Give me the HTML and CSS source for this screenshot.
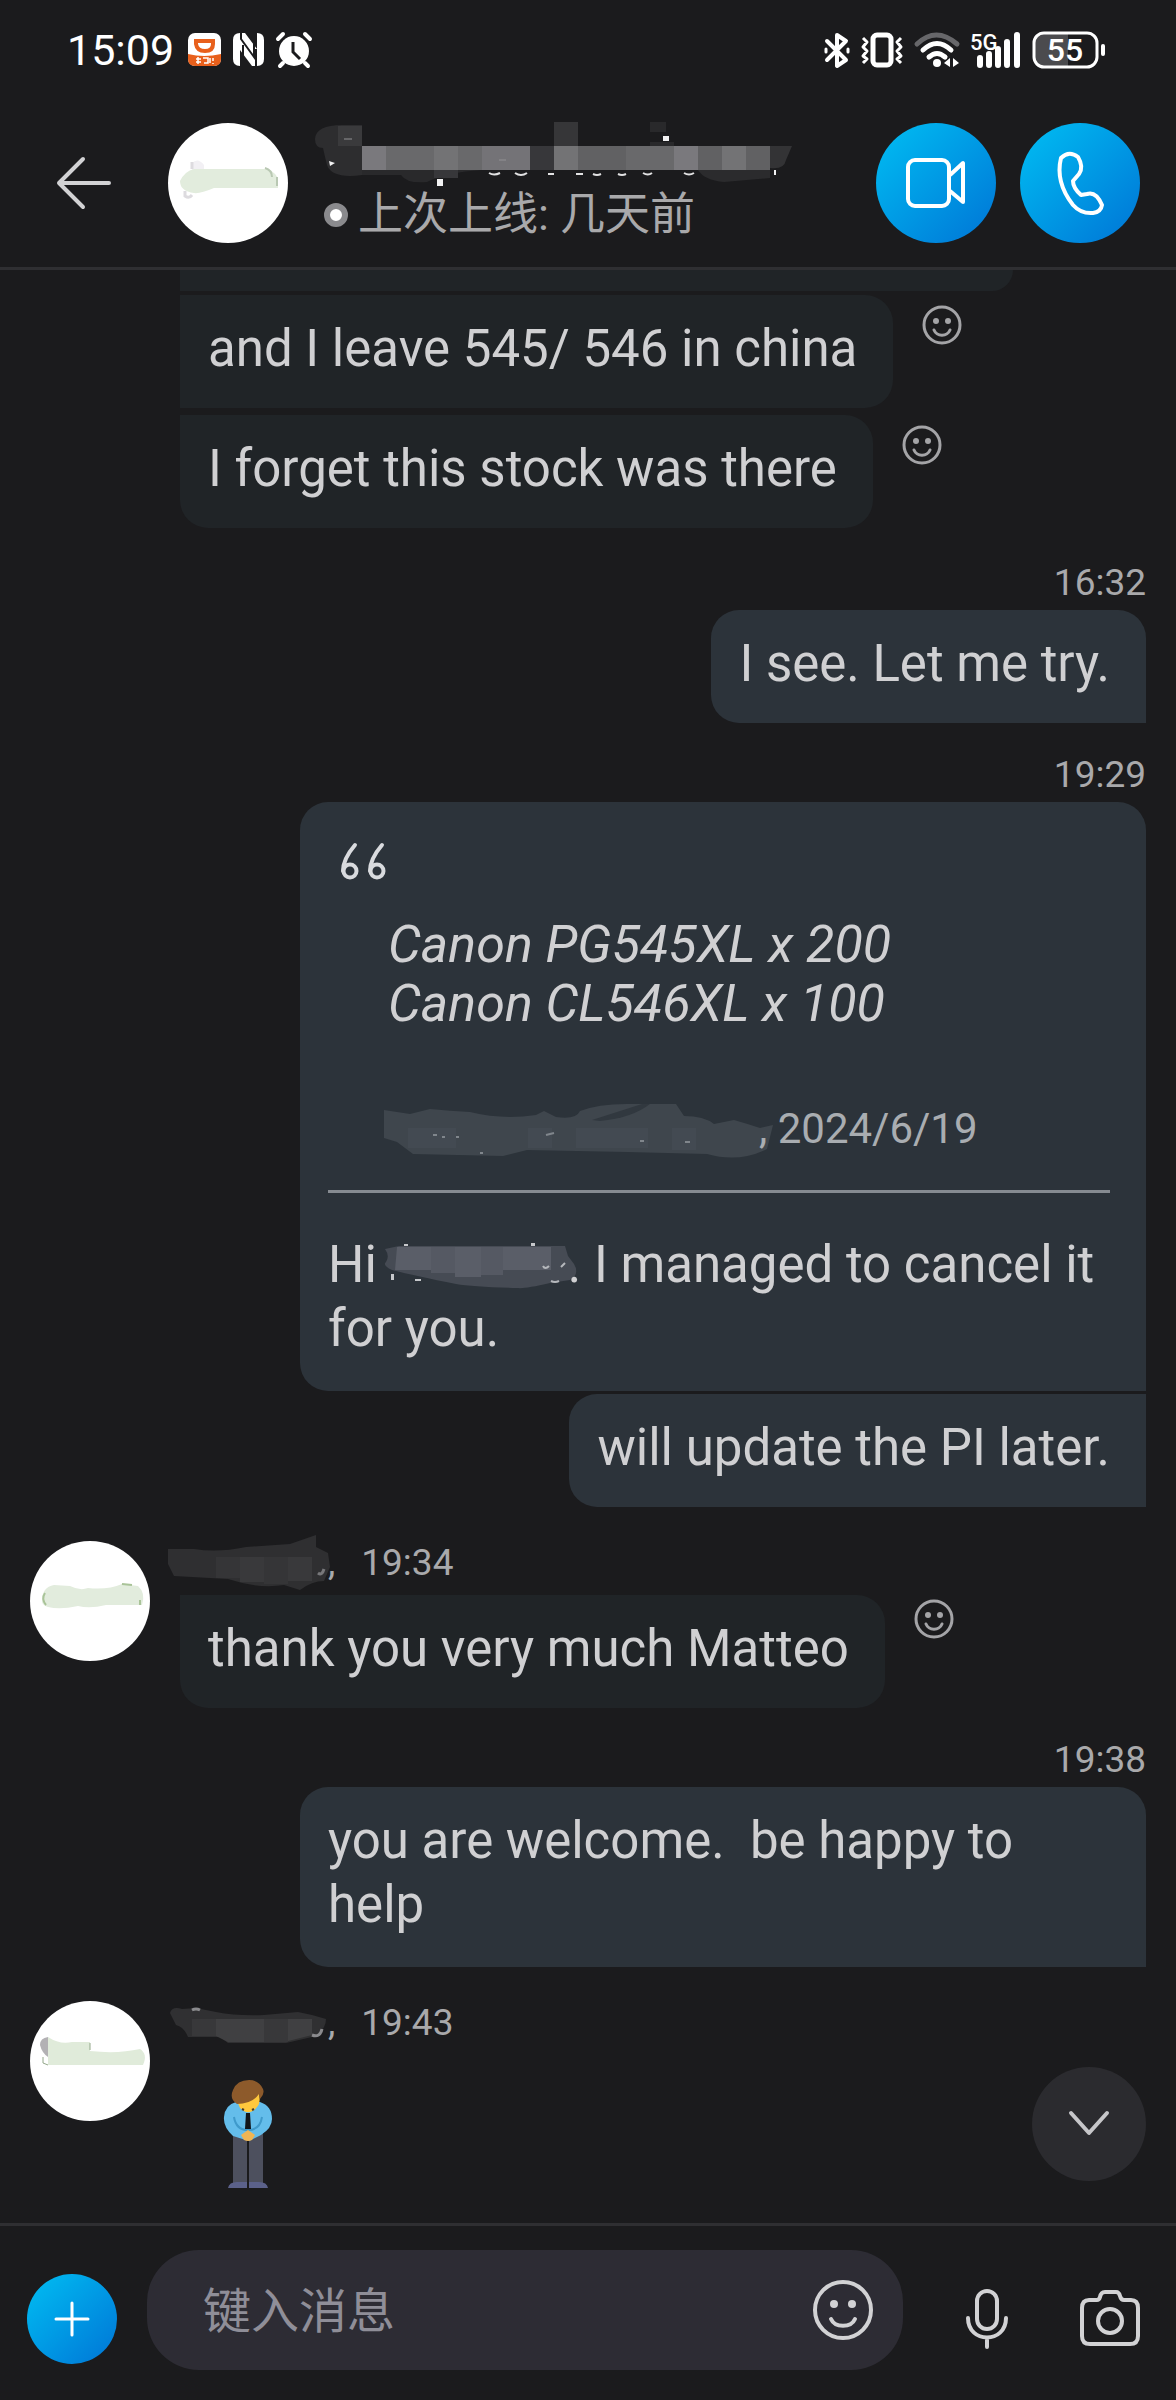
FILE: index.html
```html
<!DOCTYPE html>
<html lang="zh-CN">
<head>
<meta charset="utf-8">
<meta name="viewport" content="width=device-width, initial-scale=1">
<title>Chat</title>
<link rel="stylesheet" href="styles.css">
</head>
<body>
<svg class="defs" width="0" height="0" aria-hidden="true">
  <symbol id="smile" viewBox="0 0 40 40">
    <circle cx="20" cy="20" r="18" fill="none" stroke="currentColor" stroke-width="3"/>
    <circle cx="14" cy="16" r="3" fill="currentColor"/>
    <circle cx="26" cy="16" r="3" fill="currentColor"/>
    <path d="M12 25c3 7 13 7 16 0" fill="none" stroke="currentColor" stroke-width="3" stroke-linecap="round"/>
  </symbol>
</svg>

<div class="status-bar">
  <span class="clock">15:09</span>
  <div class="status-left">
    <svg width="33" height="34" viewBox="0 0 33 34" aria-hidden="true">
      <rect width="33" height="33" rx="7" fill="#fff"/>
      <path d="M0 21q16 4 33 0v5q0 7-7 7H7q-7 0-7-7z" fill="#e8601c"/>
      <path d="M8 8h17v3q0 7-8 7t-9-7z" fill="none" stroke="#e8601c" stroke-width="4"/>
      <path d="M8 26h5M10 24v7M8 29h5M15 25h5v5h-4M22 25v5M25 25v3M25 30v1" stroke="#fff" stroke-width="1.5" fill="none"/>
    </svg>
    <svg width="31" height="34" viewBox="0 0 31 34" aria-hidden="true">
      <path d="M7 0h5l12 16V0q7 0 7 7v19q0 7-7 7h-5L7 17v16q-7 0-7-7V7q0-7 7-7z" fill="#fff"/>
      <path d="M8 0v6l13 18V4M10 33V12M23 33V16" stroke="#1b1b1d" stroke-width="2" fill="none"/>
    </svg>
    <svg width="36" height="36" viewBox="0 0 36 36" aria-hidden="true">
      <circle cx="18" cy="19" r="15" fill="#fff"/>
      <path d="M2 7l5-5M34 7l-5-5M7 31l-3 3M29 31l3 3" stroke="#fff" stroke-width="4" stroke-linecap="round"/>
      <path d="M17 10v10l7 7" stroke="#1b1b1d" stroke-width="3" fill="none"/>
    </svg>
  </div>
  <div class="status-right">
    <svg width="26" height="38" viewBox="0 0 26 38" aria-hidden="true" fill="none" stroke="#fff" stroke-width="4" stroke-linejoin="round" stroke-linecap="round">
      <path d="M3 10l19 19-9 6V4l9 6L3 29"/>
      <path d="M2 18v3M24 18v3" stroke-width="3"/>
    </svg>
    <svg width="44" height="38" viewBox="0 0 44 38" aria-hidden="true" fill="none" stroke="#fff" stroke-linejoin="round">
      <rect x="13" y="4" width="18" height="30" rx="4" stroke-width="5"/>
      <path d="M3 7l4 4-4 5 4 4-4 5 4 3-4 4M41 7l-4 4 4 5-4 4 4 5-4 3 4 4" stroke-width="3"/>
    </svg>
    <svg width="46" height="38" viewBox="0 0 46 38" aria-hidden="true" fill="none" stroke-linecap="round" stroke-width="5">
      <path d="M3 13q19-18 40 0" stroke="#67676a"/>
      <path d="M9 19q14-13 28 0M15 26q8-7 16 0" stroke="#fff"/>
      <circle cx="23" cy="32" r="4" fill="#fff"/>
      <path d="M36 27v9l-6-4zM39 27v9l6-4z" fill="#fff"/>
    </svg>
    <svg width="52" height="38" viewBox="0 0 52 38" aria-label="5G">
      <text x="0" y="19" class="net">5G</text>
      <path d="M10 27v7M19 23v11M28 18v16M37 11v23M47 4v30" stroke="#fff" stroke-width="6" stroke-linecap="round"/>
    </svg>
    <svg width="74" height="38" viewBox="0 0 74 38" aria-label="55%">
      <path d="M12 3h24v32H12q-9 0-9-9V12q0-9 9-9z" fill="#4b4b4e"/>
      <rect x="2" y="2" width="63" height="34" rx="10" fill="none" stroke="#fff" stroke-width="3"/>
      <text x="33" y="30" text-anchor="middle" class="battery">55</text>
      <path d="M71 15v8" stroke="#fff" stroke-width="4" stroke-linecap="round"/>
    </svg>
  </div>
</div>

<header class="header">
  <button class="icon-button back" aria-label="返回">
    <svg width="54" height="54" viewBox="0 0 54 54" fill="none" stroke="#d2d2d4" stroke-width="4" stroke-linecap="round" stroke-linejoin="round"><path d="M26 3L2 27l24 24M2 27h50"/></svg>
  </button>
  <svg class="avatar" viewBox="0 0 120 120" role="img" aria-label="头像">
    <circle cx="60" cy="60" r="60" fill="#fff"/>
    <path d="M24 40q6-6 12 2v8H24z" fill="#f2f0f4"/>
    <path d="M12 58q5-10 14-12h74q8 4 10 10v9H46q-14 6-20 5-14-2-14-12z" fill="#e2ecdd"/>
    <path d="M24 46v-7M17 68v5q4 3 7-1" stroke="#dddbdf" stroke-width="3" fill="none"/>
    <path d="M97 45q7 2 7 9M109 54v9" stroke="#b9c8b3" stroke-width="2" fill="none"/>
  </svg>
  <div class="who">
    <svg width="480" height="75" viewBox="0 0 480 75" role="img" aria-label="联系人">
      <path d="M3 22Q4 8 30 8h20v50q-30 4-35-10-2-8-4-17-8 0-8-9z" fill="#2d2d2f"/>
      <path d="M50 53h120q-35 2-55 12-20 2-26-7H50z" fill="#29292b"/>
      <path d="M386 53h72v8l-46 4q-20-2-26-12z" fill="#2b2b2d"/>
      <path d="M26 9h24v20H26z" fill="#3a3a3c"/>
      <path d="M242 5h24v24h-24z" fill="#363638"/>
      <path d="M338 5h16v10h-16zM338 25h24v4h-24z" fill="#29292b"/>
      <path d="M50 29h24v24H50zM362 29h24v24h-24z" fill="#7a797d"/>
      <path d="M74 29h48v24H74zM146 29h24v24h-24zM314 29h48v24h-48z" fill="#69696b"/>
      <path d="M122 29h24v24h-24zM242 29h24v24h-24zM410 29h24v24h-24z" fill="#737375"/>
      <path d="M170 29h48v24h-48z" fill="#747377"/>
      <path d="M122 53h24v8h-24zM218 29h24v24h-24z" fill="#37373a"/>
      <path d="M266 29h48v24h-48zM386 29h24v24h-24zM434 29h24v24h-24z" fill="#616163"/>
      <path d="M458 29h22l-6 14q-2 10-16 8z" fill="#333335"/>
      <path d="M125 62h6v7h-6zM351 19h6v5h-6zM462 53h2v5h-2zM17 44l6 2-5 3z" fill="#f1f1f2"/>
      <path d="M177 56q5 3 11 0M203 56q6 4 12 0M236 57h6M264 57h7M281 57q4 2 8 0M306 57q4 2 8 0M331 56q5 3 9 0M372 56q5 3 10 0" stroke="#e2e2e3" stroke-width="2" fill="none"/>
      <path d="M32 22h8M187 43h7" stroke="#929295" stroke-width="1"/>
    </svg>
    <p class="presence"><span class="dot"></span>上次上线: 几天前</p>
  </div>
  <div class="calls">
    <button class="round call" aria-label="视频通话">
      <svg width="62" height="54" viewBox="0 0 62 54" fill="none" stroke="#fff" stroke-width="4" stroke-linejoin="round"><rect x="3" y="4" width="41" height="46" rx="7"/><path d="M45 19L58 7v39L45 35"/></svg>
    </button>
    <button class="round call" aria-label="语音通话">
      <svg width="50" height="64" viewBox="0 0 50 64" fill="none" stroke="#fff" stroke-width="4" stroke-linejoin="round"><path d="M6 7Q14-1 23 6q6 10 1 17l-6 7q0 7 8 14l6-1q9-3 15 11-1 7-9 8-12 1-20-8Q0 31 6 7z"/></svg>
    </button>
  </div>
</header>

<main class="chat">
  <section class="received tail">
    <div class="bubble clipped"></div>
    <div class="row spaced"><p class="bubble">and I leave 545/ 546 in china</p>
      <button class="icon-button react" aria-label="添加表情"><svg width="40" height="40"><use href="#smile"/></svg></button></div>
    <div class="row"><p class="bubble last">I forget this stock was there</p>
      <button class="icon-button react" aria-label="添加表情"><svg width="40" height="40"><use href="#smile"/></svg></button></div>
  </section>

  <section class="sent">
    <time class="stamp">16:32</time>
    <p class="bubble">I see. Let me try.</p>
  </section>

  <section class="sent">
    <time class="stamp">19:29</time>
    <div class="bubble multiline">
      <blockquote class="quote">
        <svg class="quote-mark" width="44" height="38" viewBox="0 0 44 38" fill="none" stroke="#d9dbde" stroke-width="4" stroke-linecap="round"><path d="M14 2Q2 16 2 28"/><circle cx="9" cy="28" r="6.500"/><path d="M41 2Q29 16 29 28"/><circle cx="36" cy="28" r="6.500"/></svg>
        <p class="quote-text">Canon PG545XL x 200<br>Canon CL546XL x 100</p>
        <footer class="quote-meta">
          <svg width="371" height="50" viewBox="0 0 371 50" role="img" aria-label="姓名">
            <path d="M-4 6l26 4 20-5q20 2 40 3 32 8 66 3l8-4 12 6q20 3 24-6 20-8 54-7h42l8 12q20 0 30 8l20-4q14 4 26 8l13-3-6 24q-28 14-60 5l-80-2-100-2-24 6-90-2-16-12-13-4z" fill="#3f464d"/>
            <path d="M20 24h48v20H20zM140 24h24v20h-24zM188 24h72v20h-72zM284 24h24v22h-24z" fill="#434a52"/>
            <path d="M204 16l50-16h8q-18 14-50 17z" fill="#31383f"/>
            <path d="M45 31h4M54 33h3M68 33h3M158 31l8-2M252 37h4M297 38h5M92 49h3" stroke="#80868c" stroke-width="2"/>
          </svg><span>, 2024/6/19</span>
        </footer>
      </blockquote>
      <p class="reply">Hi<svg class="name-mask" width="183" height="44" viewBox="0 0 183 44" role="img" aria-label="姓名">
        <path d="M0 3l14-3h166l3 10 6 8q6 10-4 16l-20 3q-26 6-32 5-44-1-62-4-40-8-64-14-10-5-6-8 4-6-1-13z" fill="#464b54"/>
        <path d="M12 1h34v23H10zM70 1h26v30H70zM118 1h48v23h-48z" fill="#5a5e68"/>
        <path d="M46 1h24v26H46zM96 1h22v28H96z" fill="#555963"/>
        <path d="M6 28h3v6H6zM19-2h4v2h-4zM146-3h4v3h-4zM30 33h6v2h-6z" fill="#c6c8cb"/>
        <path d="M158 20q2 4 6 0M166 35q4 2 8 0M176 21l4-4" stroke="#b5b8bc" stroke-width="2" fill="none"/>
      </svg>. I managed to cancel it for you.</p>
    </div>
    <p class="bubble joined">will update the PI later.</p>
  </section>

  <section class="received">
    <svg class="avatar" viewBox="0 0 120 120" role="img" aria-label="头像">
      <circle cx="60" cy="60" r="60" fill="#fff"/>
      <path d="M12 60q0-14 12-16l16 1q10 5 18 2 20 2 34-4l16 2q8 7 4 19H76q-16 4-28 1-18 4-30 1-6-2-6-6z" fill="#e2ecdd"/>
      <path d="M15 52q-4 6 1 12M110 59v5M92 43l10 1" stroke="#a9c398" stroke-width="2" fill="none"/>
    </svg>
    <div class="messages">
      <p class="sender">
        <svg width="148" height="44" viewBox="0 0 148 44" role="img" aria-label="姓名">
          <path d="M-12 8h26q24 4 52-2l44-3 26-9v12l12 6 2 14-6 14q-12 0-24 9l-16-5q-26 4-56-6l-54-3-6-12z" fill="#2f2f31"/>
          <path d="M60 16h24v25H60zM108 16h24v24h-24z" fill="#39393b"/>
          <path d="M36 16h24v21H36zM84 16h24v27H84z" fill="#353537"/>
          <path d="M138 32q4 3 6-4" stroke="#77777a" stroke-width="3" fill="none"/>
        </svg><span>,</span><time>19:34</time>
      </p>
      <div class="row"><p class="bubble last">thank you very much Matteo</p>
        <button class="icon-button react high" aria-label="添加表情"><svg width="40" height="40"><use href="#smile"/></svg></button></div>
    </div>
  </section>

  <section class="sent">
    <time class="stamp">19:38</time>
    <p class="bubble multiline">you are welcome.&nbsp; be happy to help</p>
  </section>

  <section class="received">
    <svg class="avatar" viewBox="0 0 120 120" role="img" aria-label="头像">
      <circle cx="60" cy="60" r="60" fill="#fff"/>
      <path d="M10 44q0-7 8-8v20q-6-4-8-12z" fill="#b3b1b4"/>
      <path d="M18 36q12 8 24 5h18v9q28 3 50-2 8 5 3 16H18z" fill="#e0ebda"/>
      <path d="M60 42v7M13 56v6l5 2" stroke="#93a78a" stroke-width="1" fill="none"/>
    </svg>
    <div class="messages">
      <p class="sender">
        <svg width="148" height="44" viewBox="0 0 148 44" role="img" aria-label="姓名">
          <path d="M-10 12q2-7 12-4l14-1 20 4q20 4 48 3l34-3 14 3 14 4q0 12-14 18l-26 6H48l-8-6H8q-4-10-12-12z" fill="#303032"/>
          <path d="M36 18h48v23H48l-12-6zM108 18h24v16l-24 6z" fill="#404042"/>
          <path d="M12 18h24v17H12zM84 18h24v23H84z" fill="#38383a"/>
          <path d="M132 34q8 3 10-6M12 9q4-2 8 0" stroke="#8a8a8d" stroke-width="3" fill="none"/>
        </svg><span>,</span><time>19:43</time>
      </p>
      <svg class="emoji" width="50" height="110" viewBox="0 0 50 110" role="img" aria-label="鞠躬">
        <path d="M10 54h14v50H10zM26 54h14v50H26z" fill="#4d505e"/>
        <path d="M5 109q1-6 9-6h10v6zM26 109v-6h10q8 0 9 6z" fill="#5b618a"/>
        <path d="M13 23h24q12 4 12 17 0 9-11 16l-12 6-16-5Q0 48 1 38q1-12 12-15z" fill="#64bdeb"/>
        <path d="M11 38q2 13 14 13t14-13" fill="none" stroke="#3f9acb" stroke-width="2"/>
        <path d="M14 22l22-8q2 10-2 14-8 10-17 1z" fill="#ffc83d"/>
        <path d="M19 30l2 1M29 31l2-1" stroke="#493b28" stroke-width="2"/>
        <path d="M23 34h4l1 16h-6z" fill="#12151a"/>
        <path d="M18 56l7-5 7 5-3 5q-4 2-8 0z" fill="#f0b554"/>
        <path d="M14 25Q6 20 10 11q4-10 16-10 10 0 14 9 2 5-3 10-1-3-1-5-7 10-22 10z" fill="#8d5a2b"/>
      </svg>
    </div>
  </section>

  <button class="round scroll-down" aria-label="滚动到底部">
    <svg width="42" height="28" viewBox="0 0 42 28" fill="none" stroke="#c6c6c9" stroke-width="4" stroke-linecap="round" stroke-linejoin="round"><path d="M3 3l18 20L39 3"/></svg>
  </button>
</main>

<footer class="toolbar">
  <button class="round add" aria-label="添加">
    <svg width="36" height="36" viewBox="0 0 36 36" stroke="#fff" stroke-width="3" stroke-linecap="round"><path d="M18 2v32M2 18h32"/></svg>
  </button>
  <div class="composer">
    <input type="text" placeholder="键入消息" aria-label="键入消息">
    <button class="icon-button" aria-label="表情">
      <svg width="60" height="60" viewBox="0 0 60 60" fill="none" stroke="#d2d2d4" stroke-width="4" stroke-linecap="round"><circle cx="30" cy="30" r="28"/><path d="M18 39c4 9 20 9 24 0"/><circle cx="21" cy="24" r="4" fill="#d2d2d4" stroke="none"/><circle cx="39" cy="24" r="4" fill="#d2d2d4" stroke="none"/></svg>
    </button>
  </div>
  <button class="icon-button mic" aria-label="语音">
    <svg width="42" height="60" viewBox="0 0 42 60" fill="none" stroke="#d2d2d4" stroke-width="4" stroke-linecap="round"><rect x="11" y="2" width="20" height="38" rx="10"/><path d="M2 29c0 26 38 26 38 0M21 49v9"/></svg>
  </button>
  <button class="icon-button camera" aria-label="相机">
    <svg width="60" height="56" viewBox="0 0 60 56" fill="none" stroke="#d2d2d4" stroke-width="4" stroke-linejoin="round"><path d="M9 10h8q2 0 3-3 1-5 5-5h11q3 0 4 4 1 4 4 4h7q7 0 7 8v28q0 8-8 8H10q-8 0-8-8V18q0-8 7-8z"/><circle cx="30" cy="31" r="12"/></svg>
  </button>
</footer>
</body>
</html>
```
FILE: styles.css
```css
* {
  box-sizing: border-box;
}

body {
  margin: 0;
  min-height: 100vh;
  display: flex;
  flex-direction: column;
  background: #1b1b1d;
  color: #d0d0d2;
  font-family: Roboto, "Noto Sans CJK SC", sans-serif;
  font-size: 51px;
  line-height: 64px;
}

p,
blockquote {
  margin: 0;
}

button {
  border: 0;
  padding: 0;
  color: inherit;
  cursor: pointer;
}

svg {
  display: block;
  flex: none;
  overflow: visible;
}

.defs {
  position: absolute;
}

.icon-button {
  flex: none;
  background: none;
}

.round {
  display: grid;
  place-items: center;
  flex: none;
  border-radius: 50%;
  background: linear-gradient(135deg, #00b7f0 10%, #0078d7 95%);
}

/* Status bar */

.status-bar {
  display: flex;
  align-items: center;
  height: 99px;
  padding: 0 70px 0 67px;
  color: #fff;
}

.clock {
  font-size: 43px;
}

.status-left,
.status-right {
  display: flex;
  align-items: center;
}

.status-left {
  gap: 12px;
  margin-left: 14px;
}

.status-right {
  gap: 10px;
  margin-left: auto;
}

.net {
  fill: #fff;
  font-size: 22px;
  font-weight: 500;
  line-height: 22px;
}

.battery {
  fill: #fff;
  font-size: 32px;
  font-weight: 500;
}

/* Header */

.header {
  display: flex;
  align-items: center;
  height: 171px;
  padding: 0 36px 0 57px;
  border-bottom: 3px solid #2f2f32;
}

.back {
  margin-right: 57px;
}

.avatar {
  width: 120px;
  height: 120px;
}

.who {
  flex: 1;
  min-width: 0;
  margin-left: 24px;
  padding-bottom: 12px;
}

.presence {
  display: flex;
  align-items: center;
  gap: 10px;
  padding-left: 12px;
  font-size: 45px;
  line-height: 46px;
  color: #a9a9ab;
  white-space: nowrap;
}

.dot {
  width: 24px;
  height: 24px;
  border: 6px solid #8a8a8d;
  border-radius: 50%;
  background: #fff;
}

.calls {
  display: flex;
  gap: 24px;
}

.call {
  width: 120px;
  height: 120px;
}

/* Conversation */

.chat {
  position: relative;
  flex: 1;
  padding: 0 30px;
}

.bubble {
  width: fit-content;
  padding: 22px 36px 27px 28px;
}

.received {
  display: flex;
  gap: 30px;
  padding-top: 34px;
}

.tail {
  display: block;
  margin-left: 150px;
  padding: 0 0 3px;
}

.received .bubble {
  background: #202427;
  border-radius: 0 28px 28px 0;
}

.received .last {
  border-bottom-left-radius: 28px;
}

.received .clipped {
  width: 833px;
  height: 21px;
  margin-bottom: 4px;
  padding: 0;
  border-radius: 0 0 28px 0;
}

.row {
  display: flex;
  align-items: flex-start;
  gap: 29px;
}

.spaced {
  padding-bottom: 7px;
}

.react {
  margin-top: 10px;
  color: #a4a4a7;
}

.high {
  margin-top: 4px;
}

.sender {
  display: flex;
  height: 44px;
  margin-bottom: 10px;
  font-size: 37px;
  line-height: 44px;
  color: #a9a9ab;
}

.sender time {
  margin-left: 26px;
}

.emoji {
  margin: 34px 0 0 43px;
}

.sent {
  display: flex;
  flex-direction: column;
  align-items: flex-end;
  padding-top: 30px;
}

.stamp {
  margin-bottom: 5px;
  font-size: 37px;
  line-height: 44px;
  color: #a9a9ab;
}

.sent .bubble {
  max-width: calc(100% - 270px);
  background: #2c333a;
  border-radius: 28px 28px 0 28px;
}

.sent .multiline {
  padding-bottom: 30px;
}

.sent .joined {
  margin-top: 3px;
  border-top-right-radius: 0;
}

.quote {
  padding-top: 19px;
  border-bottom: 3px solid #868b91;
}

.quote-mark {
  margin-left: 13px;
}

.quote-text {
  margin: 34px 0 71px 60px;
  font-size: 52px;
  font-style: italic;
  line-height: 59px;
}

.quote-meta {
  display: flex;
  margin: 0 0 36px 60px;
  font-size: 42px;
  line-height: 50px;
  color: #a9adb1;
}

.reply {
  margin-top: 40px;
}

.name-mask {
  display: inline-block;
  margin-left: 8px;
  vertical-align: -8px;
}

.scroll-down {
  position: absolute;
  right: 30px;
  bottom: 42px;
  width: 114px;
  height: 114px;
  background: #2b2b2f;
}

/* Message entry */

.toolbar {
  display: flex;
  align-items: flex-end;
  padding: 24px 36px 30px 27px;
  border-top: 3px solid #2f2f32;
}

.add {
  width: 90px;
  height: 90px;
  margin-bottom: 6px;
}

.composer {
  display: flex;
  align-items: center;
  flex: 1;
  min-width: 0;
  height: 120px;
  margin-left: 30px;
  padding: 0 30px 0 56px;
  border-radius: 52px;
  background: #2d2c34;
}

.composer input {
  flex: 1;
  min-width: 0;
  padding: 3px 0 0;
  border: 0;
  outline: 0;
  background: none;
  color: #d0d0d2;
  font: inherit;
  font-size: 48px;
}

.composer input::placeholder {
  color: #8f8e98;
  opacity: 1;
}

.mic {
  margin: 0 72px 21px 63px;
}

.camera {
  margin-bottom: 24px;
}
```
